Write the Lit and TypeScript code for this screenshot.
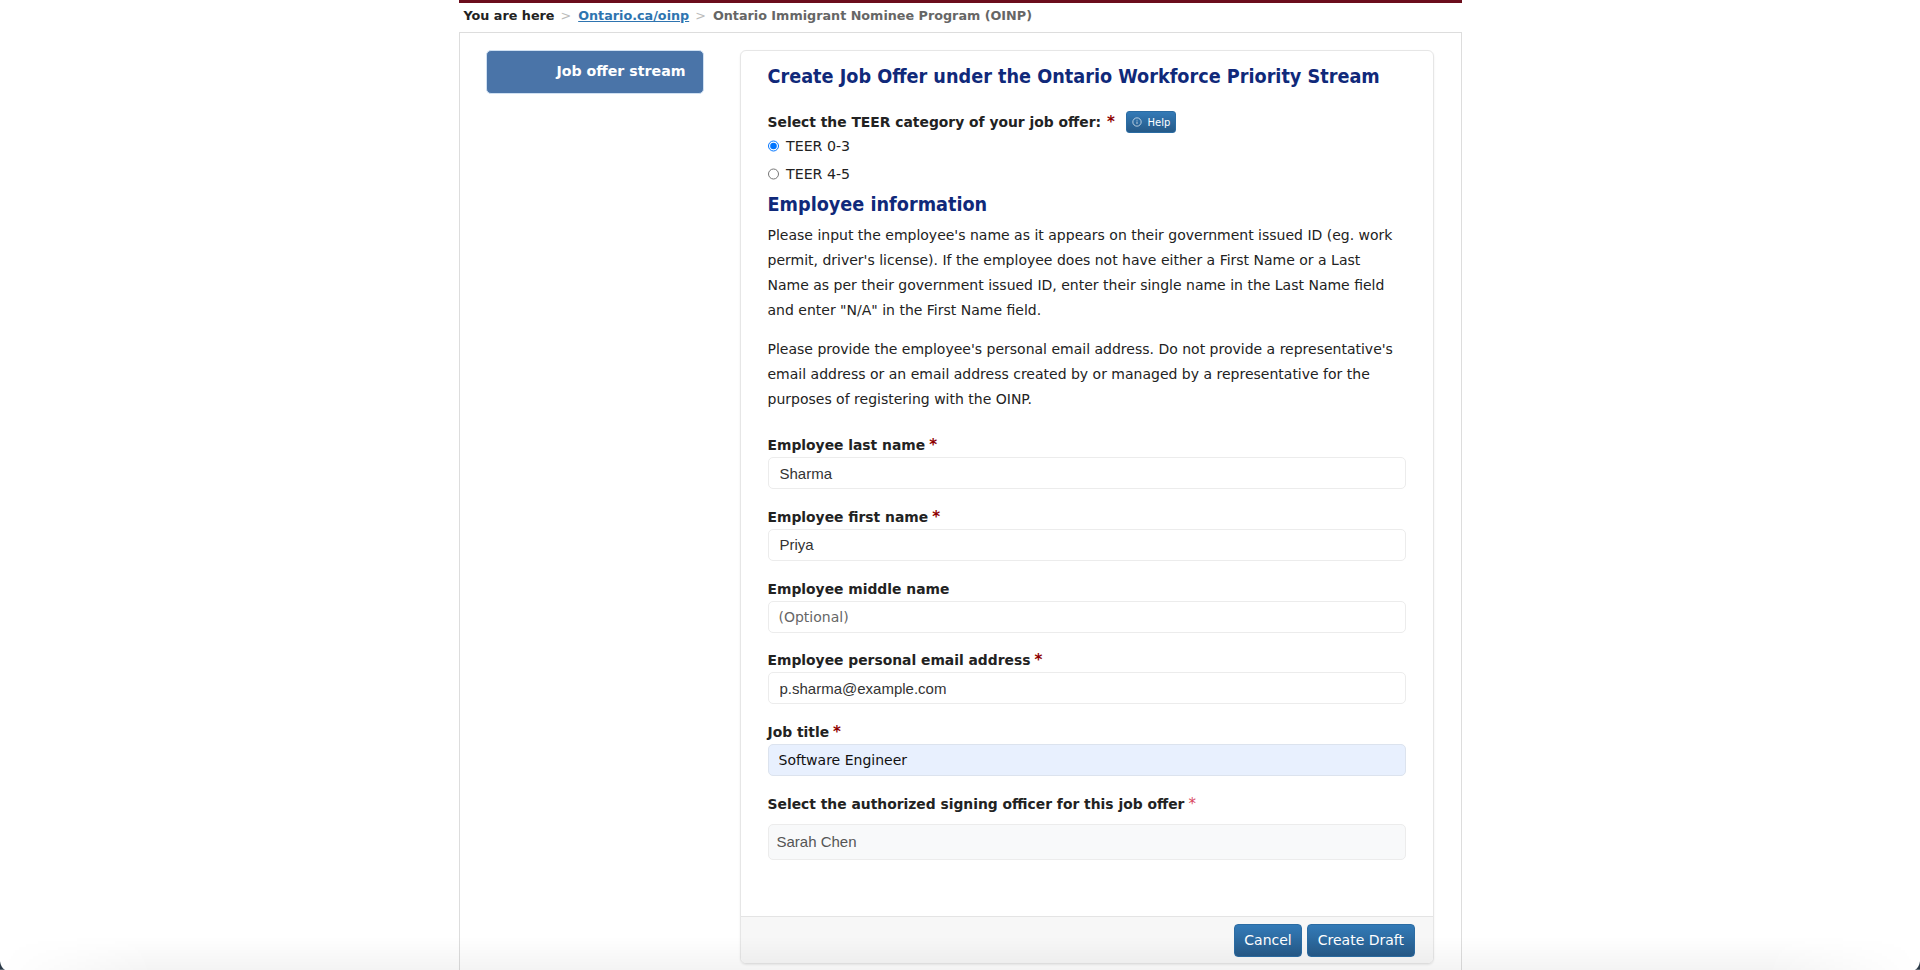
import { LitElement, html, css } from "lit";
import { customElement } from "lit/decorators.js";

@customElement("app-root")
export class AppRoot extends LitElement {
  static styles = css`
    :host {
      display: block;
      height: 970px;
      overflow: hidden;
      position: relative;
      background: #fff;
      font-family: "DejaVu Sans", Verdana, sans-serif;
      font-size: 14px;
      color: #1f1f1f;
    }
    .page {
      width: 1003px;
      margin: 0 auto;
      border-top: 3px solid #6b0d1c;
    }
    .crumbs {
      height: 29px;
      display: flex;
      align-items: flex-start;
      padding: 5px 0 0 5px;
      box-sizing: border-box;
      font-size: 12.75px;
      font-weight: 700;
      line-height: 16px;
      color: #222;
    }
    .crumbs a { color: #2e74b0; text-decoration: underline; }
    .crumbs .sep { color: #bbb; font-weight: 400; margin: 0 7px 0 6px; }
    .crumbs .cur { color: #666; }
    .frame {
      border: 1px solid #ddd;
      border-bottom: 0;
      padding: 17px 26px 0;
      height: 938px;
      box-sizing: border-box;
      display: flex;
      gap: 36px;
      align-items: flex-start;
    }
    .side {
      flex: 0 0 218px;
      height: 44px;
      box-sizing: border-box;
      background: #4a74a8;
      border: 1px solid #cfe0f2;
      border-radius: 5px;
      color: #fff;
      font-weight: 700;
      font-size: 14.2px;
      display: flex;
      justify-content: flex-end;
      padding: 12px 17px 0 0;
      line-height: 17px;
    }
    .panel {
      flex: 0 0 694px;
      width: 694px;
      height: 914px;
      box-sizing: border-box;
      border: 1px solid #e6e6e6;
      border-radius: 6px;
      box-shadow: 0 1px 2px rgba(0, 0, 0, 0.08);
      display: flex;
      flex-direction: column;
    }
    .body {
      flex: 1;
      padding: 13px 27px 0;
    }
    h1, h2 {
      font-family: "DejaVu Sans Condensed", "DejaVu Sans", Verdana, sans-serif;
      font-stretch: condensed;
      font-size: 19.65px;
      line-height: 26px;
      font-weight: 700;
      color: #10297a;
      white-space: nowrap;
    }
    h1 { margin: 0 0 21px; }
    h2 { margin: 3.5px 0 5px; }
    .teer {
      display: flex;
      align-items: center;
      font-size: 13.87px;
      font-weight: 700;
      height: 22px;
      line-height: 17px;
      color: #222;
    }
    .req { color: #8e0000; font-weight: 700; font-size: 15px; margin-left: 4px; line-height: 17px; }
    .teer .req { margin-left: 6px; }
    .req.light { color: #d9485f; font-weight: 400; }
    .help {
      margin-left: 11px;
      width: 50px;
      height: 22px;
      box-sizing: border-box;
      border-radius: 3px;
      background: linear-gradient(#337ab7, #265a88);
      border: 1px solid #2b6ca3;
      color: #fff;
      font-family: inherit;
      font-size: 10px;
      font-weight: 400;
      display: flex;
      align-items: center;
      justify-content: center;
      gap: 6px;
      padding: 0;
    }
    .help svg { width: 10px; height: 10px; display: block; }
    .radio {
      display: flex;
      align-items: center;
      height: 28px;
      gap: 7px;
      font-size: 14.2px;
    }
    .radio:first-of-type { margin-top: -1px; }
    .radio input { margin: 0; width: 11.5px; height: 11.5px; accent-color: #0075ff; }
    .radio span { color: #222; }
    p {
      margin: 0 0 14px;
      font-size: 14px;
      line-height: 25.1px;
      color: #222;
    }
    p:last-of-type { margin-bottom: 25px; }
    .field { height: 71.7px; }
    .field label {
      display: block;
      font-size: 13.87px;
      font-weight: 700;
      line-height: 17px;
      height: 20px;
      color: #222;
    }
    .ctl {
      display: block;
      width: 100%;
      height: 32px;
      box-sizing: border-box;
      border: 1px solid #ececec;
      border-radius: 5px;
      background: #fff;
      padding: 0 11px;
      font-family: "Liberation Sans", Arial, sans-serif;
      font-size: 15px;
      color: #333;
      outline: none;
    }
    .ctl.dj { font-family: "DejaVu Sans", Verdana, sans-serif; font-size: 14px; padding: 0 10px; }
    .ctl.dj::placeholder { color: #666; opacity: 1; }
    .ctl.auto { background: #e8f0fe; border-color: #dce3ee; color: #111; }
    .sel .ctl {
      height: 36px;
      background: #f8f9fa;
      padding: 0 8px;
      color: #555;
      margin-top: 8px;
    }
    .foot {
      height: 47px;
      box-sizing: border-box;
      border-top: 1px solid #e4e4e4;
      background: #f7f7f7;
      border-radius: 0 0 6px 6px;
      display: flex;
      justify-content: flex-end;
      align-items: center;
      gap: 5px;
      padding: 0 18px 0 0;
    }
    .btn {
      height: 33px;
      box-sizing: border-box;
      border: 1px solid #2b6ca3;
      border-radius: 4px;
      background: linear-gradient(#337ab7, #265a88);
      color: #fff;
      font-family: inherit;
      font-size: 14px;
      padding: 0 9.5px;
    }
    .fade {
      position: absolute;
      left: 0;
      right: 0;
      bottom: 0;
      height: 34px;
      background: linear-gradient(rgba(0, 0, 0, 0), rgba(0, 0, 0, 0.045));
      -webkit-mask-image: linear-gradient(90deg, transparent, #000 8%, #000 92%, transparent);
      mask-image: linear-gradient(90deg, transparent, #000 8%, #000 92%, transparent);
      pointer-events: none;
    }
    .corner {
      position: absolute;
      bottom: 0;
      width: 5px;
      height: 9px;
      pointer-events: none;
      display: block;
    }
    .corner.l { left: 0; }
    .corner.r { right: 0; transform: scaleX(-1); }
  `;

  private field(label: string, value: string, required = true, cls = "", placeholder = "") {
    return html`<div class="field">
      <label>${label}${required ? html`<span class="req">*</span>` : ""}</label>
      <input class="ctl ${cls}" .value=${value} placeholder=${placeholder} />
    </div>`;
  }

  render() {
    return html`
      <div class="page">
        <nav class="crumbs">
          <span>You are here</span><span class="sep">&gt;</span>
          <a href="#">Ontario.ca/oinp</a><span class="sep">&gt;</span>
          <span class="cur">Ontario Immigrant Nominee Program (OINP)</span>
        </nav>
        <div class="frame">
          <div class="side">Job offer stream</div>
          <div class="panel">
            <div class="body">
              <h1>Create Job Offer under the Ontario Workforce Priority Stream</h1>
              <div class="teer">
                Select the TEER category of your job offer:
                <span class="req">*</span>
                <button class="help">
                  <svg viewBox="0 0 12 12" fill="none" stroke="#fff" stroke-width="0.8">
                    <circle cx="6" cy="6" r="5"></circle>
                    <path d="M6 5.4v3M6 3.4v1"></path>
                  </svg>
                  Help
                </button>
              </div>
              <label class="radio"><input type="radio" name="teer" checked /><span>TEER 0-3</span></label>
              <label class="radio"><input type="radio" name="teer" /><span>TEER 4-5</span></label>
              <h2>Employee information</h2>
              <p>Please input the employee's name as it appears on their government issued ID (eg. work permit, driver's license). If the employee does not have either a First Name or a Last Name as per their government issued ID, enter their single name in the Last Name field and enter "N/A" in the First Name field.</p>
              <p>Please provide the employee's personal email address. Do not provide a representative's email address or an email address created by or managed by a representative for the purposes of registering with the OINP.</p>
              ${this.field("Employee last name", "Sharma")}
              ${this.field("Employee first name", "Priya")}
              ${this.field("Employee middle name", "", false, "dj", "(Optional)")}
              ${this.field("Employee personal email address", "p.sharma@example.com")}
              ${this.field("Job title", "Software Engineer", true, "dj auto")}
              <div class="field sel">
                <label>Select the authorized signing officer for this job offer<span class="req light">*</span></label>
                <input class="ctl" .value=${"Sarah Chen"} readonly />
              </div>
            </div>
            <div class="foot">
              <button class="btn">Cancel</button>
              <button class="btn">Create Draft</button>
            </div>
          </div>
        </div>
      </div>
      <div class="fade"></div>
      <svg class="corner l" viewBox="0 0 7 12"><path d="M0 0V12H7C3 10 1 6 0 0Z" fill="#2b3a48"></path></svg>
      <svg class="corner r" viewBox="0 0 7 12"><path d="M0 0V12H7C3 10 1 6 0 0Z" fill="#2b3a48"></path></svg>
    `;
  }
}
